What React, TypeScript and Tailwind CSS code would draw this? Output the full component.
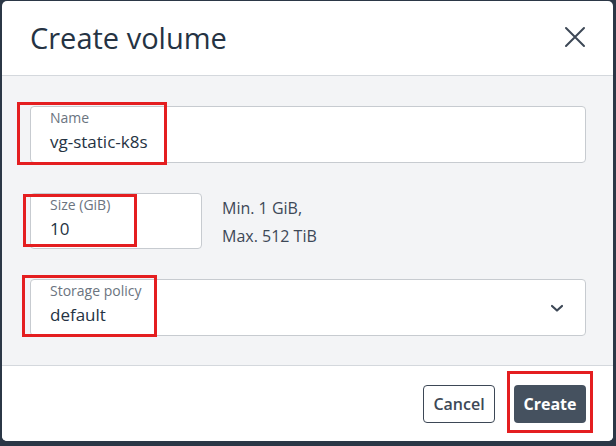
import React from "react";

function RedBox({ l, t, r, b }: { l: number; t: number; r: number; b: number }) {
  return (
    <div
      className="pointer-events-none absolute border-[3px] border-[#e41e20]"
      style={{ left: l, top: t, width: r - l, height: b - t }}
    />
  );
}

export default function App() {
  return (
    <div
      className="relative h-[446px] w-[616px] overflow-hidden bg-[#2b3746] pl-[2px] pt-[1px]"
      style={{ fontFamily: '"Open Sans", "Noto Sans", sans-serif' }}
    >
      <div className="flex h-[440px] w-[611px] flex-col overflow-hidden rounded-[5px] bg-white">
        <div className="flex h-[75px] shrink-0 items-center justify-between border-b border-[#d4d8dd] pl-[28px] pr-[27px]">
          <h1 className="-mt-[1px] text-[29px] leading-none font-normal text-[#253343]">Create volume</h1>
          <svg width="22" height="22" viewBox="0 0 22 22" className="-mt-[2px]">
            <path d="M2 2 L20 20 M20 2 L2 20" stroke="#3d4856" strokeWidth="2" strokeLinecap="round" fill="none" />
          </svg>
        </div>
        <div className="flex h-[289px] shrink-0 flex-col bg-[#f3f4f6] pl-[28px] pr-[27px] pt-[30px]">
          <div className="flex h-[57px] w-[556px] flex-col rounded-[4px] border border-[#c7cbd0] bg-white pl-[19px] pt-[1px]">
            <span className="text-[14px] leading-[20px] text-[#6b7480]">Name</span>
            <span className="mt-[2px] text-[17px] leading-[24px] text-[#253343]">vg-static-k8s</span>
          </div>
          <div className="mt-[30px] flex h-[56px] items-start">
            <div className="flex h-[56px] w-[172px] flex-col rounded-[4px] border border-[#c7cbd0] bg-white pl-[19px] pt-[1px]">
              <span className="text-[14px] leading-[20px] text-[#6b7480]">Size (GiB)</span>
              <span className="mt-[2px] text-[17px] leading-[24px] text-[#253343]">10</span>
            </div>
            <div className="ml-[20px] flex flex-col pt-[1px] text-[16px] leading-[28px] text-[#3d4856]">
              <span>Min. 1 GiB,</span>
              <span>Max. 512 TiB</span>
            </div>
          </div>
          <div className="mt-[30px] flex h-[57px] w-[556px] items-start justify-between rounded-[4px] border border-[#c7cbd0] bg-white pl-[19px] pr-[21px] pt-[1px]">
            <div className="flex flex-col">
              <span className="text-[14px] leading-[20px] text-[#6b7480]">Storage policy</span>
              <span className="mt-[2px] text-[17px] leading-[24px] text-[#253343]">default</span>
            </div>
            <svg width="14" height="10" viewBox="0 0 14 10" className="mt-[22px]">
              <path d="M2 3 L7 7.5 L12 3" stroke="#3d4856" strokeWidth="2.2" fill="none" strokeLinecap="round" strokeLinejoin="round" />
            </svg>
          </div>
        </div>
        <div className="flex flex-1 items-start justify-end gap-[19px] border-t border-[#d4d8dd] bg-white pr-[27px] pt-[19px]">
          <button className="h-[38px] w-[72px] rounded-[4px] border border-[#3d4856] bg-white text-[16px] font-semibold text-[#3d4856]">
            Cancel
          </button>
          <button className="h-[38px] w-[72px] rounded-[4px] bg-[#45515f] text-[16px] font-bold text-white">
            Create
          </button>
        </div>
      </div>
      <RedBox l={17} t={102} r={167} b={165} />
      <RedBox l={23} t={194} r={137} b={247} />
      <RedBox l={22} t={275} r={157} b={337} />
      <RedBox l={507} t={371} r={593} b={433} />
    </div>
  );
}
